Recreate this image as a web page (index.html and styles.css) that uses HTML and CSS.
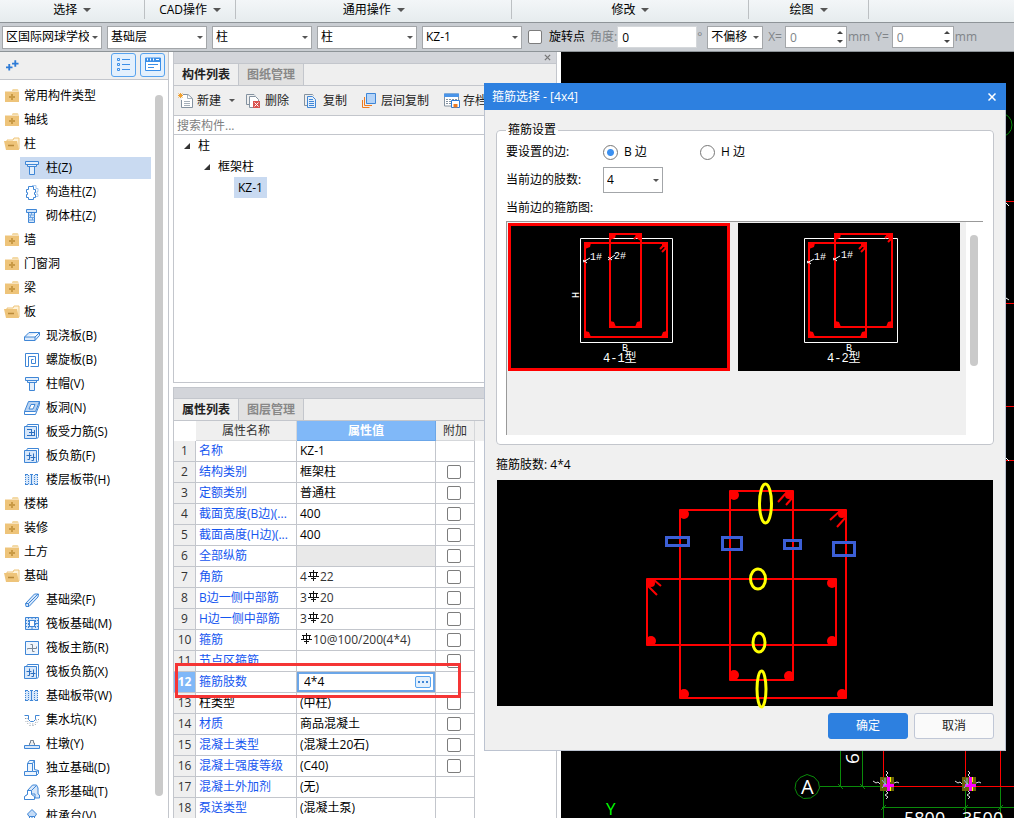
FILE: index.html
```
<!DOCTYPE html>
<html lang="zh-CN">
<head>
  <meta charset="UTF-8">
  <meta name="viewport" content="width=device-width, initial-scale=1.0">
  <title>箍筋选择</title>
  <link rel="stylesheet" href="styles.css">
</head>
<body>
  <!-- 图标库 -->
  <svg class="sprite" aria-hidden="true">
    <symbol id="i-folder" viewBox="0 0 16 16">
      <path d="M8 2l1-1h4.500l1 1v1H8z" fill="#f3d9a4"/><path d="M1 3.500h14V14H1z" fill="#eec47a"/>
      <path d="M8 6v6M5 9h6" stroke="#c99a45" stroke-width="2"/>
    </symbol>
    <symbol id="i-open" viewBox="0 0 16 16">
      <path d="M3 4h6l1-2h5v11H3z" fill="#fff3d9" stroke="#eec47a"/><path d="M0 5h13l2 9H2z" fill="#eec47a"/>
      <path d="M4 9.500h6" stroke="#b98a3a" stroke-width="1.500"/>
    </symbol>
    <symbol id="i-column" viewBox="0 0 16 16">
      <path d="M1.500 1.500h13v3h-13zM3.500 4.500h9v2h-9zM5.500 6.500h5v8h-5z" fill="#e4effb" stroke="#3f86d6"/>
    </symbol>
    <symbol id="i-gz" viewBox="0 0 16 16">
      <path d="M8 1.500h4v3h2v3h-1v3h1v2h-2" fill="none" stroke="#a9c9ee"/>
      <path d="M4.500 2.500h5v3h2v3h-1v2h1v3h-2v2h-5v-2h-2v-3h1v-2h-1v-3h2z" fill="#fff" stroke="#3f86d6"/>
    </symbol>
    <symbol id="i-qt" viewBox="0 0 16 16">
      <path d="M2.500 1.500h10v3h-10zM4.500 4.500h6v10h-6z" fill="#d5e6f9" stroke="#3f86d6"/>
      <path d="M4.500 7h6M4.500 9.500h6M4.500 12h6M7.500 5v2M6.500 7v2.500M8.500 9.500v2.500" stroke="#6ba3e3"/>
    </symbol>
    <symbol id="i-slab" viewBox="0 0 16 16">
      <path d="M.500 9L5 4.500h10.500v3L11 12.500H.500zM.500 9H11l4.500-4.500M11 9v3.500" fill="#dceafb" stroke="#3f86d6"/>
    </symbol>
    <symbol id="i-spiral" viewBox="0 0 16 16">
      <path d="M4.500 14.500h-3v-13h13v13h-8M4.500 14.500v-10h7v7h-4v-4h2" fill="none" stroke="#3f86d6"/>
    </symbol>
    <symbol id="i-hole" viewBox="0 0 16 16">
      <path d="M4.500 1.500h11l-4 10H.500z" fill="#b8d3f2" stroke="#3f86d6"/><path d="M.500 11.500v3h11l4-10v-3" fill="none" stroke="#3f86d6"/>
      <path d="M7 4.500h4l-2 4.500H5z" fill="#fff" stroke="#3f86d6"/>
    </symbol>
    <symbol id="i-sl" viewBox="0 0 16 16">
      <path d="M2.500 2.500l1-2h11v12l-1 2" fill="none" stroke="#3f86d6"/><path d="M.500 2.500h12v12H.500z" fill="#d7e7fa" stroke="#3f86d6"/>
      <path d="M3 5.500h4.500M3 11.500h8M5 8.500h6M7.500 5v6M10.500 6v6" stroke="#2b6fc0" fill="none"/>
    </symbol>
    <symbol id="i-fj" viewBox="0 0 16 16">
      <path d="M2.500 2.500l1-2h11v12l-1 2" fill="none" stroke="#3f86d6"/><path d="M.500 2.500h12v12H.500z" fill="#d7e7fa" stroke="#3f86d6"/>
      <path d="M5.500 4.500v7h-2M9.500 5.500v7h-2M2.500 7.500h5M6.500 9.500h5" stroke="#2b6fc0" fill="none"/>
    </symbol>
    <symbol id="i-band" viewBox="0 0 16 16">
      <path d="M1 3h13v10H1z" fill="#d7e7fa"/><path d="M1 2.500h3M6 2.500h3M11 2.500h3M1 12.500h3M6 12.500h3M11 12.500h3M7.500 2v11" stroke="#3f86d6"/>
      <path d="M1.500 3v10M4.500 3v10M10.500 3v10M13.500 3v10" stroke="#3f86d6" stroke-dasharray="1 1"/>
    </symbol>
    <symbol id="i-beam" viewBox="0 0 16 16">
      <path d="M1.500 11.500l9-9.500h4l-.500 3-9 9.500H2z" fill="#d7e7fa" stroke="#3f86d6"/><path d="M1.500 11.500h3v3M4.500 11.500L14 2" fill="none" stroke="#3f86d6"/>
    </symbol>
    <symbol id="i-raft" viewBox="0 0 16 16">
      <path d="M1.500 1.500h13v12h-13z" fill="#d7e7fa" stroke="#3f86d6"/><path d="M5.500 4.500h5v6h-5z" fill="#fff" stroke="#3f86d6"/>
      <path d="M1 4.500h14M1 10.500h14M4.500 1v12M11.500 1v12M8 1v3M8 11v3M1 7.500h3M12 7.500h3" stroke="#3f86d6" stroke-dasharray="2 1"/>
    </symbol>
    <symbol id="i-main" viewBox="0 0 16 16">
      <path d="M1.500 1.500h13v13h-13z" fill="#eef5fd" stroke="#3f86d6"/>
      <path d="M3.500 9.500v-1h9v-2M6.500 4.500h2v7h2" fill="none" stroke="#7a8796"/>
    </symbol>
    <symbol id="i-pit" viewBox="0 0 16 16">
      <path d="M.500 3.500h4v4l2 2h3l2-2v-4h4" fill="none" stroke="#3f86d6"/>
      <path d="M1.500 6v3l4 4.500h5l4-4.500V6M3 6l1 4 3 2h3l2-2 1-4" fill="none" stroke="#8b97a5" stroke-dasharray="1 2"/>
    </symbol>
    <symbol id="i-pier" viewBox="0 0 16 16">
      <path d="M5.500 9V7h1V4.500h3V7h1v2" fill="#eee" stroke="#7a8796"/><path d="M.500 9.500h15v3H.500z" fill="#d7e7fa" stroke="#3f86d6"/>
    </symbol>
    <symbol id="i-single" viewBox="0 0 16 16">
      <path d="M.500 11.500h3v-8l2-3h5v9l4 1v3l-2 2H.500z" fill="#eef5fd" stroke="#3f86d6"/>
      <path d="M3.500 3.500h5v8h-5M8.500 3.500l2-3M8.500 11.500h4v4M12.500 11.500l2-1" fill="none" stroke="#3f86d6"/>
    </symbol>
    <symbol id="i-strip" viewBox="0 0 16 16">
      <path d="M.500 15.500v-3l3-2v-4l5-5.500h4l1.500 3v6l1.500 1v3H11v-4H4.500" fill="#d7e7fa" stroke="#3f86d6"/>
      <path d="M.500 15.500v-3l3-2v-4h4v4l3 2v3z" fill="#fff" stroke="#3f86d6"/><path d="M7.500 6.500l5-5" stroke="#3f86d6"/>
    </symbol>
    <symbol id="i-cap" viewBox="0 0 16 16">
      <path d="M8 1.500L12.500 6 11 8.500H5L3.500 6z" fill="#c4dbf6" stroke="#3f86d6"/><path d="M5.500 9v6M10.500 9v6M8 9v6" stroke="#3f86d6"/>
    </symbol>
    <symbol id="i-rebar" viewBox="0 0 11 11">
      <path d="M5.500 0v11M0 6.500h11M1 2.500h9M2.500 2v4M8.500 2v4M3 8.500h5" fill="none" stroke="#111"/>
    </symbol>
  </svg>

  <header class="ribbon">
    <button class="group g1">选择</button>
    <button class="group g2">CAD操作</button>
    <button class="group g3">通用操作</button>
    <button class="group g4">修改</button>
    <button class="group g5">绘图</button>
    <div class="group-rest"></div>
  </header>

  <div class="options">
    <span class="select"><select aria-label="工程"><option>区国际网球学校</option></select></span>
    <span class="select"><select aria-label="楼层"><option>基础层</option></select></span>
    <span class="select"><select aria-label="构件大类"><option>柱</option></select></span>
    <span class="select"><select aria-label="构件类型"><option>柱</option></select></span>
    <span class="select"><select aria-label="构件"><option>KZ-1</option></select></span>
    <label class="rotate"><input type="checkbox">旋转点</label>
    <label class="dim angle">角度:<input type="text" value="0"><span>°</span></label>
    <span class="select offset"><select aria-label="偏移"><option>不偏移</option></select></span>
    <label class="dim xy">X=<span class="spin"><input type="text" value="0"></span>mm</label>
    <label class="dim xy">Y=<span class="spin"><input type="text" value="0"></span>mm</label>
  </div>

  <main class="workspace">
    <nav class="sidebar">
      <div class="side-tools">
        <svg class="plus" viewBox="0 0 14 12"><path d="M3.500 5v7M0 8.500h7M10 1v7M6.500 4.500h7" fill="none" stroke="#2e7bd6" stroke-width="2"/></svg>
        <button class="view" aria-label="列表视图"><svg viewBox="0 0 16 16"><path d="M1.500 1.500h2v2h-2zM1.500 6.500h2v2h-2zM1.500 11.500h2v2h-2zM6 2.500h8M6 7.500h8M6 12.500h8" fill="none" stroke="#3b8fe8"/></svg></button>
        <button class="view" aria-label="面板视图"><svg viewBox="0 0 16 16"><path d="M.500 1h15v12.500H.500z" fill="#fff" stroke="#3b8fe8"/><path d="M.500 1h15v4H.500z" fill="#3b8fe8"/><path d="M2.500 1.500v2M5.500 1.500v2M8.500 1.500v2M11 2.500h3" stroke="#fff"/><path d="M3 7.500h10M3 10.500h6" stroke="#3b8fe8"/></svg></button>
      </div>
      <div class="side-body">
        <ul class="types">
          <li><svg><use href="#i-folder"/></svg>常用构件类型</li>
          <li><svg><use href="#i-folder"/></svg>轴线</li>
          <li><svg><use href="#i-open"/></svg>柱</li>
          <li class="sub selected"><svg><use href="#i-column"/></svg>柱(Z)</li>
          <li class="sub"><svg><use href="#i-gz"/></svg>构造柱(Z)</li>
          <li class="sub"><svg><use href="#i-qt"/></svg>砌体柱(Z)</li>
          <li><svg><use href="#i-folder"/></svg>墙</li>
          <li><svg><use href="#i-folder"/></svg>门窗洞</li>
          <li><svg><use href="#i-folder"/></svg>梁</li>
          <li><svg><use href="#i-open"/></svg>板</li>
          <li class="sub"><svg><use href="#i-slab"/></svg>现浇板(B)</li>
          <li class="sub"><svg><use href="#i-spiral"/></svg>螺旋板(B)</li>
          <li class="sub"><svg><use href="#i-column"/></svg>柱帽(V)</li>
          <li class="sub"><svg><use href="#i-hole"/></svg>板洞(N)</li>
          <li class="sub"><svg><use href="#i-sl"/></svg>板受力筋(S)</li>
          <li class="sub"><svg><use href="#i-fj"/></svg>板负筋(F)</li>
          <li class="sub"><svg><use href="#i-band"/></svg>楼层板带(H)</li>
          <li><svg><use href="#i-folder"/></svg>楼梯</li>
          <li><svg><use href="#i-folder"/></svg>装修</li>
          <li><svg><use href="#i-folder"/></svg>土方</li>
          <li><svg><use href="#i-open"/></svg>基础</li>
          <li class="sub"><svg><use href="#i-beam"/></svg>基础梁(F)</li>
          <li class="sub"><svg><use href="#i-raft"/></svg>筏板基础(M)</li>
          <li class="sub"><svg><use href="#i-main"/></svg>筏板主筋(R)</li>
          <li class="sub"><svg><use href="#i-fj"/></svg>筏板负筋(X)</li>
          <li class="sub"><svg><use href="#i-band"/></svg>基础板带(W)</li>
          <li class="sub"><svg><use href="#i-pit"/></svg>集水坑(K)</li>
          <li class="sub"><svg><use href="#i-pier"/></svg>柱墩(Y)</li>
          <li class="sub"><svg><use href="#i-single"/></svg>独立基础(D)</li>
          <li class="sub"><svg><use href="#i-strip"/></svg>条形基础(T)</li>
          <li class="sub"><svg><use href="#i-cap"/></svg>桩承台(V)</li>
        </ul>
        <div class="side-scroll"></div>
      </div>
    </nav>

    <div class="docks">
      <section class="dock">
        <div class="grip"><button aria-label="关闭面板"><svg viewBox="0 0 8 8"><path d="M1 1l6 6M7 1L1 7" stroke="#777" stroke-width="1.500"/></svg></button></div>
        <div class="tabs"><button class="tab active">构件列表</button><button class="tab">图纸管理</button></div>
        <div class="tools">
          <button class="new"><svg viewBox="0 0 16 16"><path d="M5 1.500h5l4.500 4v9h-11V7" fill="#fff" stroke="#8492a0"/><path d="M9.500 1.500v4h5M6 8.500h6M6 10.500h6M6 12.500h6" fill="none" stroke="#a5b0ba"/><path d="M.500.500l4 4M4.500.500l-4 4M2.500 0v5M0 2.500h5" stroke="#f0a030"/></svg>新建</button>
          <button><svg viewBox="0 0 16 16"><path d="M3 11.500H.500v-10H8l1 1" fill="none" stroke="#8492a0"/><path d="M3.500 3.500h6l3 3v8h-9z" fill="#fff" stroke="#8492a0"/><path d="M7 8h7v7H7z" fill="#d9534f"/><path d="M8.500 9.500l4 4M12.500 9.500l-4 4" stroke="#fff"/></svg>删除</button>
          <button><svg viewBox="0 0 16 16"><path d="M3 12.500H.500v-11h8l1 1" fill="none" stroke="#8492a0"/><path d="M3.500 3.500h5l3 3v8h-8z" fill="#e4effb" stroke="#3f86d6"/><path d="M5 6.500h4M5 8.500h5M5 10.500h5M5 12.500h5" stroke="#3f86d6"/></svg>复制</button>
          <button><svg viewBox="0 0 16 16"><path d="M4.500 .500h9v10h-9z" fill="#b5d4f8" stroke="#3f86d6"/><path d="M2.500 4v8.500H10M.500 7v7.500h7" fill="none" stroke="#ee7a20"/></svg>层间复制</button>
          <button><svg viewBox="0 0 16 16"><path d="M.500 1h14v12H.500z" fill="#fff" stroke="#8492a0"/><path d="M0 .500h15v3.500H0z" fill="#4a94e8"/><path d="M2 6.500h11M2 8.500h5M2 10.500h5" stroke="#8492a0" stroke-dasharray="2 1"/><path d="M7.500 7.500h8v7h-8z" fill="#fff" stroke="#2e7bd6"/><path d="M9.500 11h4v3.500h-4z" fill="#ee7a20"/></svg>存档</button>
        </div>
        <input class="search" type="text" placeholder="搜索构件..." aria-label="搜索构件">
        <ul class="parts">
          <li>柱</li>
          <li class="lv2">框架柱</li>
          <li class="lv3"><span>KZ-1</span></li>
        </ul>
      </section>

      <section class="dock props">
        <div class="grip"></div>
        <div class="tabs"><button class="tab active">属性列表</button><button class="tab">图层管理</button></div>
        <div class="grid">
        <table>
          <colgroup><col class="c-no"><col class="c-name"><col class="c-value"><col class="c-extra"></colgroup>
          <thead><tr><th class="corner"></th><th>属性名称</th><th class="current">属性值</th><th>附加</th></tr></thead>
          <tbody>
            <tr><th>1</th><td>名称</td><td>KZ-1</td><td></td></tr>
            <tr><th>2</th><td>结构类别</td><td>框架柱</td><td><input type="checkbox" aria-label="附加 结构类别"></td></tr>
            <tr><th>3</th><td>定额类别</td><td>普通柱</td><td><input type="checkbox" aria-label="附加 定额类别"></td></tr>
            <tr><th>4</th><td>截面宽度(B边)(...</td><td>400</td><td><input type="checkbox" aria-label="附加 截面宽度"></td></tr>
            <tr><th>5</th><td>截面高度(H边)(...</td><td>400</td><td><input type="checkbox" aria-label="附加 截面高度"></td></tr>
            <tr><th>6</th><td>全部纵筋</td><td class="locked"></td><td><input type="checkbox" aria-label="附加 全部纵筋"></td></tr>
            <tr><th>7</th><td>角筋</td><td class="bar">4<svg><use href="#i-rebar"/></svg>22</td><td><input type="checkbox" aria-label="附加 角筋"></td></tr>
            <tr><th>8</th><td>B边一侧中部筋</td><td class="bar">3<svg><use href="#i-rebar"/></svg>20</td><td><input type="checkbox" aria-label="附加 B边一侧中部筋"></td></tr>
            <tr><th>9</th><td>H边一侧中部筋</td><td class="bar">3<svg><use href="#i-rebar"/></svg>20</td><td><input type="checkbox" aria-label="附加 H边一侧中部筋"></td></tr>
            <tr><th>10</th><td>箍筋</td><td class="bar"><svg><use href="#i-rebar"/></svg>10@100/200(4*4)</td><td><input type="checkbox" aria-label="附加 箍筋"></td></tr>
            <tr><th>11</th><td>节点区箍筋</td><td></td><td><input type="checkbox" aria-label="附加 节点区箍筋"></td></tr>
            <tr class="editing"><th>12<span class="mark"></span></th><td>箍筋肢数</td><td><div class="editor"><input type="text" value="4*4" aria-label="箍筋肢数"><button aria-label="选择箍筋"><svg viewBox="0 0 14 10"><path d="M2 4h2v2H2zM6 4h2v2H6zM10 4h2v2h-2z" fill="#3f86d6"/></svg></button></div></td><td></td></tr>
            <tr><th>13</th><td class="plain">柱类型</td><td>(中柱)</td><td><input type="checkbox" aria-label="附加 柱类型"></td></tr>
            <tr><th>14</th><td>材质</td><td>商品混凝土</td><td><input type="checkbox" aria-label="附加 材质"></td></tr>
            <tr><th>15</th><td>混凝土类型</td><td>(混凝土20石)</td><td><input type="checkbox" aria-label="附加 混凝土类型"></td></tr>
            <tr><th>16</th><td>混凝土强度等级</td><td>(C40)</td><td><input type="checkbox" aria-label="附加 混凝土强度等级"></td></tr>
            <tr><th>17</th><td>混凝土外加剂</td><td>(无)</td><td></td></tr>
            <tr><th>18</th><td>泵送类型</td><td>(混凝土泵)</td><td></td></tr>
          </tbody>
        </table>
        </div>
      </section>
    </div>

    <!-- 绘图区 -->
    <div class="drawing">
      <svg>
        <g fill="none" stroke="#0a8a0a">
          <circle cx="439" cy="73" r="12"/>
          <path d="M279.500 690v45M301.500 690v45M259 734.500h64M322.500 735v40M404.500 735v40M439.500 735v40M321 755.500h140M277 732l5 5M299 732l5 5M320 758l5-5M402 758l5-5M437 758l5-5"/>
          <path d="M246 722.500l7 2.500 4.500 5 1 6-3 6-6 4-7 .500-6-4-2.500-6 1-6 4-5z"/>
        </g>
        <path d="M445 149.500h20M445 251.500h20M445 354.500h20M445 408.500h20M322.500 690v44M404.500 690v44M439.500 690v44M322 734.500h142" stroke="#f00"/>
        <path d="M445 151l3 3M445 246l3 2M445 406l3 3" stroke="#fff"/>
        <g class="cad">
          <text x="240" y="742" font-size="20">A</text>
          <text x="298" y="712" font-size="19" transform="rotate(-90 298 712)">6</text>
          <text x="343" y="773" font-size="18">5800</text>
          <text x="401" y="773" font-size="18">3500</text>
          <text class="axis" x="45" y="763" font-size="17">Y</text>
        </g>
        <g id="node">
          <path d="M319 725h14v14h-14z" fill="#6b6208"/>
          <path d="M326 725h3v14h-3zM322 732h11v3h-11z" fill="#f0f"/>
          <path d="M329.500 725v5M329.500 735v4" stroke="#ff0"/><path d="M321 728l4 5M321 736l4-5M324 726v6" stroke="#8bd"/>
          <path d="M325 719l2 2-2 2 2 2M325 739l2 2-3 2 3 2-2 2M312 729l3 2 2-1 2 2M333 731l3-1 2 1" fill="none" stroke="#ddd"/>
        </g>
        <use href="#node" x="82"/>
      </svg>
    </div>
  </main>

  <div class="dialog" role="dialog" aria-labelledby="dlg-title">
    <div class="dlg-head"><span id="dlg-title">箍筋选择 - [4x4]</span><button aria-label="关闭"><svg viewBox="0 0 8 8"><path d="M.500.500l7 7M7.500.500l-7 7" stroke="#fff" stroke-width="1.500"/></svg></button></div>
    <div class="dlg-body">
      <fieldset>
        <legend>箍筋设置</legend>
        <div class="line sides">
          <span class="caption">要设置的边:</span>
          <label><input type="radio" name="side" checked>B 边</label>
          <label><input type="radio" name="side">H 边</label>
        </div>
        <div class="line limbs">
          <label class="caption" for="limbs">当前边的肢数:</label>
          <span class="select"><select id="limbs"><option>4</option></select></span>
        </div>
        <div class="line">当前边的箍筋图:</div>
        <div class="gallery">
          <div class="thumbs">
            <svg class="thumb chosen" viewBox="0 0 222 148">
              <path d="M72.500 15.500h92v104h-92z" fill="none" stroke="#fff"/>
              <path d="M77 20h82v94H77zM102 11h31v93h-31z" fill="none" stroke="#f00" stroke-width="2"/>
              <path d="M77 20h6l-1 4-5 2zM77 114v-6l4 1 2 5zM159 114v-6l-4 1-2 5zM102 11h6l-1 4-5 2zM102 104v-6l4 1 2 5zM133 104v-6l-4 1-2 5zM133 11v7l-2-1-3-3-1-3zM159 20v6l-5-3v-3z" fill="#f00"/>
              <path d="M152 26l4-4M154 29l4-4M126 16l4-4" stroke="#f00" stroke-width="2"/>
              <path d="M75 39l7-4M75 37l4 3M100 37l7-5M100 34l4 3" stroke="#fff"/>
              <text x="82" y="37" font-size="10">1#</text><text x="106" y="36" font-size="10">2#</text>
              <text x="71" y="75" font-size="10" transform="rotate(-90 71 75)">H</text><text x="114" y="128" font-size="10">B</text>
              <text x="95" y="139" font-size="12">4-1型</text>
            </svg>
            <svg class="thumb" viewBox="0 0 222 148">
              <path d="M66.500 15.500h93v104h-93z" fill="none" stroke="#fff"/>
              <path d="M71 20h57v94H71zM97 11h57v93H97z" fill="none" stroke="#f00" stroke-width="2"/>
              <path d="M71 20h6l-1 4-5 2zM71 114v-6l4 1 2 5zM128 114v-6l-4 1-2 5zM97 11h6l-1 4-5 2zM97 104v-6l4 1 2 5zM154 104v-6l-4 1-2 5zM154 11v7l-2-1-3-3-1-3zM128 20v6l-5-3v-3z" fill="#f00"/>
              <path d="M121 26l4-4M123 29l4-4M147 15l4-4M150 19l3-3" stroke="#f00" stroke-width="2"/>
              <path d="M69 40l7-4M69 38l4 3M95 37l7-4M95 35l4 3" stroke="#fff"/>
              <text x="76" y="37" font-size="10">1#</text><text x="103" y="35" font-size="10">1#</text>
              <text x="108" y="128" font-size="10">B</text>
              <text x="89" y="139" font-size="12">4-2型</text>
            </svg>
          </div>
          <div class="gallery-scroll"></div>
        </div>
      </fieldset>
      <p class="result">箍筋肢数: 4*4</p>
      <svg class="section" viewBox="0 0 496 226">
        <path d="M183 30h166v188H183zM233 11h63v189h-63zM150 99h189v66H150z" fill="none" stroke="#f00" stroke-width="2" stroke-linejoin="round"/>
        <g fill="#f00">
          <circle cx="187" cy="34" r="5"/><circle cx="345" cy="34" r="4"/><circle cx="187" cy="214" r="5"/><circle cx="345" cy="214" r="5"/>
          <circle cx="237" cy="15" r="5"/><circle cx="292" cy="15" r="4"/><circle cx="237" cy="195" r="5"/><circle cx="292" cy="196" r="5"/>
          <circle cx="154" cy="103" r="4"/><circle cx="335" cy="103" r="5"/><circle cx="154" cy="161" r="5"/><circle cx="335" cy="161" r="5"/>
        </g>
        <path d="M290 12l-9 10M296 17l-7 8M343 31l-10 9M349 37l-9 10M157 100l7 6M151 106l9 9" stroke="#f00" stroke-width="2"/>
        <path d="M169.500 57.500h22v8h-22zM225.500 57.500h19v12h-19zM287.500 60.500h16v8h-16zM336.500 62.500h21v13h-21z" fill="none" stroke="#3c5fd6" stroke-width="3"/>
        <g fill="none" stroke="#ff0" stroke-width="3">
          <ellipse cx="268.500" cy="23.500" rx="6" ry="19.500"/><ellipse cx="261" cy="99" rx="7.500" ry="10"/>
          <ellipse cx="262" cy="162.500" rx="6" ry="9.500"/><ellipse cx="264.500" cy="209" rx="4.500" ry="18"/>
        </g>
      </svg>
      <div class="actions"><button class="primary">确定</button><button>取消</button></div>
    </div>
  </div>
</body>
</html>
```
FILE: styles.css
```
* {
  box-sizing: border-box;
}

body {
  margin: 0;
  height: 100vh;
  display: flex;
  flex-direction: column;
  overflow: hidden;
  position: relative;
  background: #fff;
  color: #000;
  font-family: "Open Sans", "Noto Sans CJK SC", sans-serif;
  font-size: 12px;
  line-height: 16px;
}

button,
input,
select {
  font: inherit;
  color: inherit;
  margin: 0;
  padding: 0;
  border: none;
  background: none;
  border-radius: 0;
}

button {
  white-space: nowrap;
}

ul {
  list-style: none;
  margin: 0;
  padding: 0;
}

svg {
  display: block;
  flex: none;
}

.sprite {
  position: absolute;
  width: 0;
  height: 0;
}

/* 菜单栏 */
.ribbon {
  flex: none;
  display: flex;
  height: 23px;
  padding-bottom: 3px;
  background: linear-gradient(#f3f6f8, #e6ecee);
  border-bottom: 1px solid #8e9498;
}

.group {
  display: flex;
  align-items: center;
  justify-content: center;
  gap: 6px;
  border-right: 1px solid #bcc0c3;
}

.group::after {
  content: "";
  border: 4px solid transparent;
  border-top-color: #555;
  border-bottom: none;
}

.g1 { flex: 145; }
.g2 { flex: 90; }
.g3 { flex: 277; }
.g4 { flex: 237; }
.g5 { flex: 119; }
.group-rest { flex: 146; }

.options {
  flex: none;
  display: flex;
  align-items: center;
  gap: 5px;
  height: 29px;
  padding: 0 2px;
  background: #c9cdd2;
  border-bottom: 1px solid #8e9498;
}

.select {
  flex: none;
  position: relative;
  width: 100px;
  height: 23px;
}

.select select {
  appearance: none;
  width: 100%;
  height: 100%;
  padding: 0 12px 0 3px;
  background: #fff;
  border: 1px solid #a3a6a9;
}

.select::after {
  content: "";
  position: absolute;
  right: 4px;
  top: 10px;
  border: 3px solid transparent;
  border-top-color: #555;
  border-bottom: none;
  pointer-events: none;
}

input[type="checkbox"] {
  appearance: none;
  display: block;
  width: 14px;
  height: 14px;
  background: #fff;
  border: 1px solid #7d7d7d;
  border-radius: 2px;
}

.rotate {
  flex: none;
  display: flex;
  align-items: center;
  gap: 7px;
  padding-left: 1px;
}

.dim {
  flex: none;
  display: flex;
  align-items: center;
  color: #808488;
}

.dim input {
  width: 62px;
  height: 22px;
  padding-left: 4px;
  background: #fff;
  border: 1px solid #a3a6a9;
}

.angle input {
  width: 80px;
  color: #000;
  border-color: #d5d8db;
}

.angle span {
  width: 5px;
}

.offset {
  width: 56px;
}

.spin {
  position: relative;
  margin: 0 1px 0 3px;
}

.spin::before,
.spin::after {
  content: "";
  position: absolute;
  right: 4px;
  border: 3px solid transparent;
}

.spin::before {
  top: 5px;
  border-bottom-color: #444;
  border-top: none;
}

.spin::after {
  bottom: 5px;
  border-top-color: #444;
  border-bottom: none;
}

.workspace {
  flex: 1;
  min-height: 0;
  display: flex;
}

/* 构件类型导航 */
.sidebar {
  flex: none;
  width: 169px;
  display: flex;
  flex-direction: column;
  border-right: 1px solid #c3c6cc;
}

.side-tools {
  flex: none;
  display: flex;
  align-items: center;
  gap: 4px;
  height: 28px;
  padding: 0 3px 2px 6px;
  background: #efefef;
  border-bottom: 1px solid #c3c6cc;
}

.plus {
  width: 13px;
  height: 12px;
  margin-right: auto;
}

.view {
  width: 25px;
  height: 24px;
  display: grid;
  place-items: center;
  background: #e3f0fd;
  border: 1px solid #58a3ee;
  border-radius: 3px;
}

.view svg {
  width: 16px;
  height: 16px;
}

.side-body {
  flex: 1;
  min-height: 0;
  display: flex;
  overflow: hidden;
  padding-top: 5px;
}

.types {
  flex: 1;
}

.types li {
  display: flex;
  align-items: center;
  gap: 4px;
  height: 22px;
  margin: 0 4px 2px 0;
  padding-left: 4px;
  white-space: nowrap;
}

.types svg {
  width: 16px;
  height: 16px;
}

.types .sub {
  margin-left: 20px;
  gap: 6px;
}

.types .selected {
  background: #c9daf1;
}

.side-scroll {
  width: 8px;
  height: 701px;
  margin: 10px 5px 0 0;
  border-radius: 4px;
  background: #cacaca;
}

/* 停靠面板 */
.docks {
  flex: none;
  width: 384px;
  margin: 0 4px;
  display: flex;
  flex-direction: column;
  gap: 4px;
}

.dock {
  flex: none;
  display: flex;
  flex-direction: column;
  height: 331px;
  border: 1px solid #c3c6cc;
  border-top: none;
}

.props {
  flex: 1;
  min-height: 0;
  border-top: 1px solid #c3c6cc;
  border-bottom: none;
}

.grip {
  flex: none;
  display: flex;
  justify-content: flex-end;
  align-items: center;
  height: 12px;
  padding-right: 5px;
  background: #d3d5da;
  border-bottom: 1px solid #c3c6cc;
}

.props .grip {
  height: 11px;
}

.grip svg {
  width: 7px;
  height: 7px;
}

.tabs {
  flex: none;
  display: flex;
  height: 22px;
  background: #efefef;
  border-bottom: 1px solid #c3c6cc;
}

.tab {
  width: 65px;
  font-weight: bold;
  color: #888;
  background: #e1e1e1;
  border-right: 1px solid #c3c6cc;
}

.tab.active {
  color: #222;
  background: #efefef;
}

.tools {
  flex: none;
  display: flex;
  align-items: center;
  gap: 15px;
  height: 30px;
  padding-left: 4px;
  background: #efefef;
  border-bottom: 1px solid #c3c6cc;
  overflow: hidden;
}

.tools button {
  display: flex;
  align-items: center;
  gap: 3px;
  color: #222;
}

.tools svg {
  width: 16px;
  height: 16px;
}

.tools .new {
  margin-right: -4px;
}

.tools .new::after {
  content: "";
  margin-left: 5px;
  border: 3px solid transparent;
  border-top-color: #555;
  border-bottom: none;
}

.search {
  flex: none;
  height: 19px;
  padding-left: 3px;
  border-bottom: 1px solid #c3c6cc;
}

.search::placeholder {
  color: #808080;
}

.parts li {
  display: flex;
  align-items: center;
  gap: 8px;
  height: 21px;
  padding-left: 10px;
}

.parts li::before {
  content: "";
  border-left: 6px solid transparent;
  border-bottom: 6px solid #333;
}

.parts .lv2 {
  padding-left: 30px;
}

.parts .lv3 {
  padding-left: 60px;
}

.parts .lv3::before {
  display: none;
}

.parts span {
  padding: 3px 4px 2px;
  height: 21px;
  background: #c9daf1;
}

.grid {
  background: linear-gradient(#efefef 20px, #fff 20px);
}

table {
  width: 301px;
  table-layout: fixed;
  border-collapse: separate;
  border-spacing: 0;
}

.c-no { width: 22px; }
.c-name { width: 101px; }
.c-value { width: 139px; }
.c-extra { width: 39px; }

th,
td {
  height: 21px;
  padding: 0 0 0 3px;
  text-align: left;
  white-space: nowrap;
  line-height: 16px;
  border-right: 1px solid #c3c6cc;
  border-bottom: 1px solid #c3c6cc;
}

th {
  padding: 0;
  text-align: center;
  font-weight: normal;
  color: #333;
  background: #efefef;
}

thead th {
  height: 20px;
  border-color: #d5d7da;
}

thead .corner {
  background: #fff;
  border-color: #fff;
}

thead .current {
  color: #fff;
  font-weight: bold;
  background: #80b8f8;
  border-color: #6ba6e8;
}

td:nth-child(2) {
  color: #1556f0;
}

td.plain {
  color: #000;
}

td.locked {
  background: #e9e9e9;
}

td:last-child {
  padding-left: 11px;
}

td.bar {
  color: #333;
}

.bar svg {
  display: inline-block;
  width: 11px;
  height: 11px;
  margin: 0 1px;
}

.editing {
  position: relative;
}

.editing th {
  color: #fff;
  font-weight: bold;
  background: #80b8f8;
}

.editing td:nth-child(3) {
  padding: 0;
}

.editor {
  display: flex;
  align-items: center;
  height: 20px;
  padding: 0 2px 0 5px;
  border: 2px solid #6ba6e8;
}

.editor input {
  flex: 1;
  min-width: 0;
  height: 16px;
}

.editor button {
  width: 16px;
  height: 12px;
  background: #e3f0fd;
  border: 1px solid #58a3ee;
  border-radius: 2px;
}

.editor svg {
  width: 14px;
  height: 10px;
}

.mark {
  position: absolute;
  left: 1px;
  right: 14px;
  top: -9px;
  bottom: -5px;
  border: 3px solid #f53535;
}

.drawing {
  flex: 1;
  min-width: 0;
  background: #000;
}

.drawing svg {
  width: 100%;
  height: 100%;
}

.cad text {
  fill: #fff;
  font-family: "Open Sans", sans-serif;
}

.cad .axis {
  fill: #0f0;
}

/* 箍筋选择窗口 */
.dialog {
  position: absolute;
  left: 484px;
  top: 83px;
  width: 522px;
  background: #f0f0f0;
  border: 1px solid #bcc3d0;
  border-top: none;
}

.dlg-head {
  display: flex;
  align-items: center;
  justify-content: space-between;
  height: 27px;
  margin: 0 -1px;
  padding: 0 10px 0 8px;
  color: #fff;
  background: #2d80e0;
}

.dlg-head svg {
  width: 8px;
  height: 8px;
}

.dlg-body {
  padding: 11px;
}

fieldset {
  margin: 0;
  padding: 0 10px 9px 9px;
  min-width: 0;
  background: #fff;
  border: 1px solid #c3c6cc;
  border-radius: 4px;
}

legend {
  padding: 0 2px;
  height: 18px;
  line-height: 18px;
}

.line {
  display: flex;
  align-items: center;
  height: 26px;
}

.sides label {
  display: flex;
  align-items: center;
  gap: 6px;
  width: 97px;
}

.limbs {
  height: 30px;
}

.caption {
  width: 97px;
}

input[type="radio"] {
  appearance: none;
  width: 15px;
  height: 15px;
  border: 1px solid #777;
  border-radius: 50%;
  background: #fff;
}

input[type="radio"]:checked {
  background: radial-gradient(circle, #3c90f0 3px, #fff 4px);
}

.limbs .select {
  width: 60px;
  height: 26px;
}

.limbs .select::after {
  top: 12px;
}

.gallery {
  display: flex;
  align-items: flex-start;
  gap: 4px;
  border-top: 1px solid #999;
}

.thumbs {
  flex: 1;
  display: flex;
  align-items: flex-start;
  gap: 8px;
  height: 213px;
  padding: 1px 6px 0 1px;
  background: #f0f0f0;
  border-left: 1px solid #999;
}

.thumb {
  flex: 1;
  min-width: 0;
  background: #000;
}

.chosen {
  outline: 3px solid #f00;
  outline-offset: -3px;
}

.thumb text {
  fill: #fff;
  font-family: "Liberation Mono", "Noto Sans CJK SC", monospace;
}

.gallery-scroll {
  width: 8px;
  height: 131px;
  margin: 13px 5px 0 0;
  border-radius: 4px;
  background: #cacaca;
}

.result {
  margin: 12px 0 7px;
}

.section {
  width: calc(100% - 2px);
  margin: 0 1px;
  background: #000;
  overflow: visible;
}

.actions {
  display: flex;
  justify-content: flex-end;
  gap: 6px;
  padding-top: 7px;
}

.actions button {
  width: 80px;
  height: 26px;
  color: #222;
  background: #fafafa;
  border: 1px solid #c0c7d6;
  border-radius: 3px;
}

.actions .primary {
  color: #fff;
  background: #2d80e0;
  border-color: #2d80e0;
}
```
